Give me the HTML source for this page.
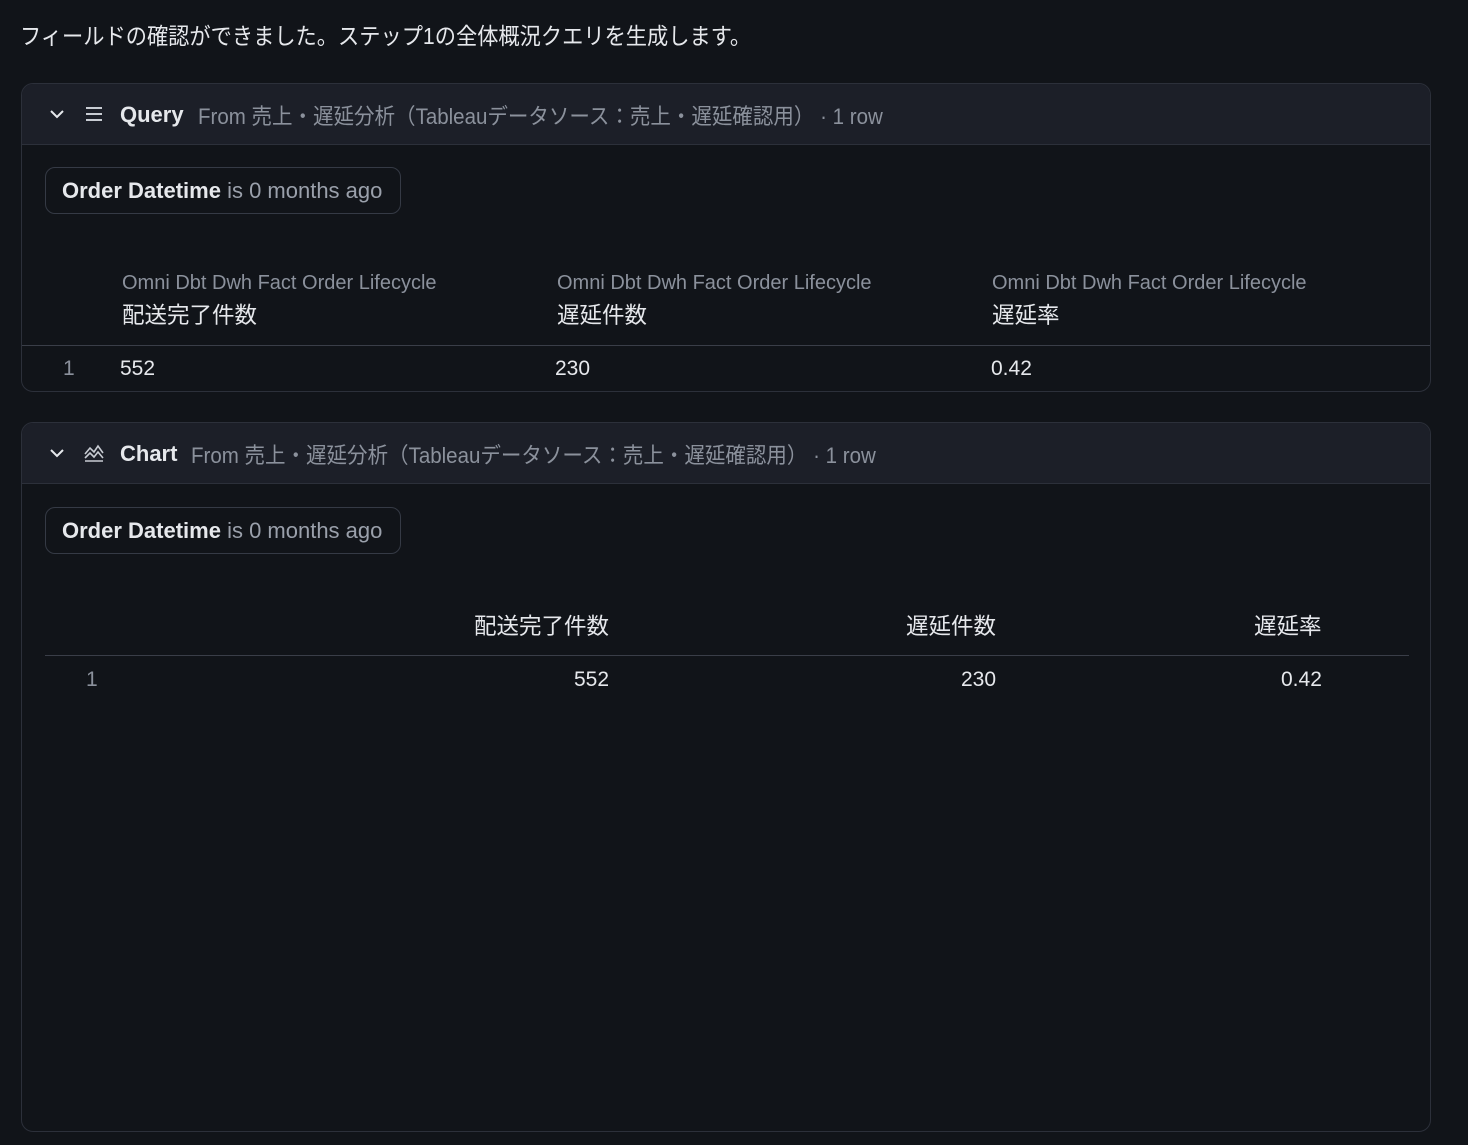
<!DOCTYPE html>
<html><head><meta charset="utf-8"><style>
*{box-sizing:border-box;margin:0;padding:0}
body{width:1468px;height:1145px;background:#111419;color:#e6e8ec;font-family:"Liberation Sans","Noto Sans CJK JP",sans-serif;position:relative;overflow:hidden}
.a{position:absolute;white-space:nowrap}
.card{position:absolute;left:21px;width:1410px;border:1px solid #2c303a;border-radius:12px;overflow:hidden;background:#111419}
.hd{height:61px;background:#1c1f28;border-bottom:1px solid #2c303a;position:relative}
.pill{position:absolute;left:23px;width:356px;height:47px;border:1px solid #353a45;border-radius:10px;font-size:22px;line-height:45px;padding-left:16px;color:#9aa0ab}
.pill b{color:#e6e8ec;font-weight:bold}
.g{color:#8b919c}
.sx{transform-origin:left center}
.j{font-size:22.5px}
</style></head><body>
<div class="a sx" style="left:20px;top:17px;font-size:23px;color:#e6e8ec;transform:scaleX(0.923)">フィールドの確認ができました。ステップ1の全体概況クエリを生成します。</div>

<div class="card" style="top:83px;height:309px">
 <div class="hd">
  <svg class="a" style="left:27px;top:24px" width="16" height="12" viewBox="0 0 16 12"><path d="M2 3l6 6 6-6" stroke="#e6e8ec" stroke-width="2" fill="none"/></svg>
  <svg class="a" style="left:63px;top:22px" width="18" height="16"><path d="M1 2h16M1 8h16M1 14h16" stroke="#c8ccd3" stroke-width="2"/></svg>
  <div class="a" style="left:98px;top:18px;font-size:22px"><b>Query</b></div>
  <div class="a g sx" style="left:176px;top:15px;font-size:22px;transform:scaleX(0.932)">From 売上・遅延分析（Tableauデータソース：売上・遅延確認用） · 1 row</div>
 </div>
 <div class="pill" style="top:83px"><b>Order Datetime</b> is 0 months ago</div>
 <div class="a g" style="left:100px;top:188px;font-size:20px">Omni Dbt Dwh Fact Order Lifecycle</div>
 <div class="a j" style="left:100px;top:214px">配送完了件数</div>
 <div class="a g" style="left:535px;top:188px;font-size:20px">Omni Dbt Dwh Fact Order Lifecycle</div>
 <div class="a j" style="left:535px;top:214px">遅延件数</div>
 <div class="a g" style="left:970px;top:188px;font-size:20px">Omni Dbt Dwh Fact Order Lifecycle</div>
 <div class="a j" style="left:970px;top:214px">遅延率</div>
 <div class="a" style="left:0;top:261px;width:1410px;border-top:1px solid #3a3e48"></div>
 <div class="a g" style="left:41px;top:273px;font-size:21px">1</div>
 <div class="a" style="left:98px;top:273px;font-size:21px">552</div>
 <div class="a" style="left:533px;top:273px;font-size:21px">230</div>
 <div class="a" style="left:969px;top:273px;font-size:21px">0.42</div>
</div>

<div class="card" style="top:422px;height:710px">
 <div class="hd">
  <svg class="a" style="left:27px;top:24px" width="16" height="12" viewBox="0 0 16 12"><path d="M2 3l6 6 6-6" stroke="#e6e8ec" stroke-width="2" fill="none"/></svg>
  <svg class="a" style="left:62px;top:21px" width="20" height="18" viewBox="0 0 20 18"><path d="M1 10l5-6 4 4 4-6 5 7M1 14l5-5 4 4 4-5 5 6M1 17h18" stroke="#c8ccd3" stroke-width="1.6" fill="none"/></svg>
  <div class="a" style="left:98px;top:18px;font-size:22px"><b>Chart</b></div>
  <div class="a g sx" style="left:169px;top:15px;font-size:22px;transform:scaleX(0.932)">From 売上・遅延分析（Tableauデータソース：売上・遅延確認用） · 1 row</div>
 </div>
 <div class="pill" style="top:84px"><b>Order Datetime</b> is 0 months ago</div>
 <div class="a j" style="left:452px;top:186px">配送完了件数</div>
 <div class="a j" style="left:884px;top:186px">遅延件数</div>
 <div class="a j" style="left:1232px;top:186px">遅延率</div>
 <div class="a" style="left:23px;top:232px;width:1364px;border-top:1px solid #3a3e48"></div>
 <div class="a g" style="left:64px;top:245px;font-size:21px">1</div>
 <div class="a" style="left:552px;top:245px;font-size:21px">552</div>
 <div class="a" style="left:939px;top:245px;font-size:21px">230</div>
 <div class="a" style="left:1259px;top:245px;font-size:21px">0.42</div>
</div>
</body></html>
